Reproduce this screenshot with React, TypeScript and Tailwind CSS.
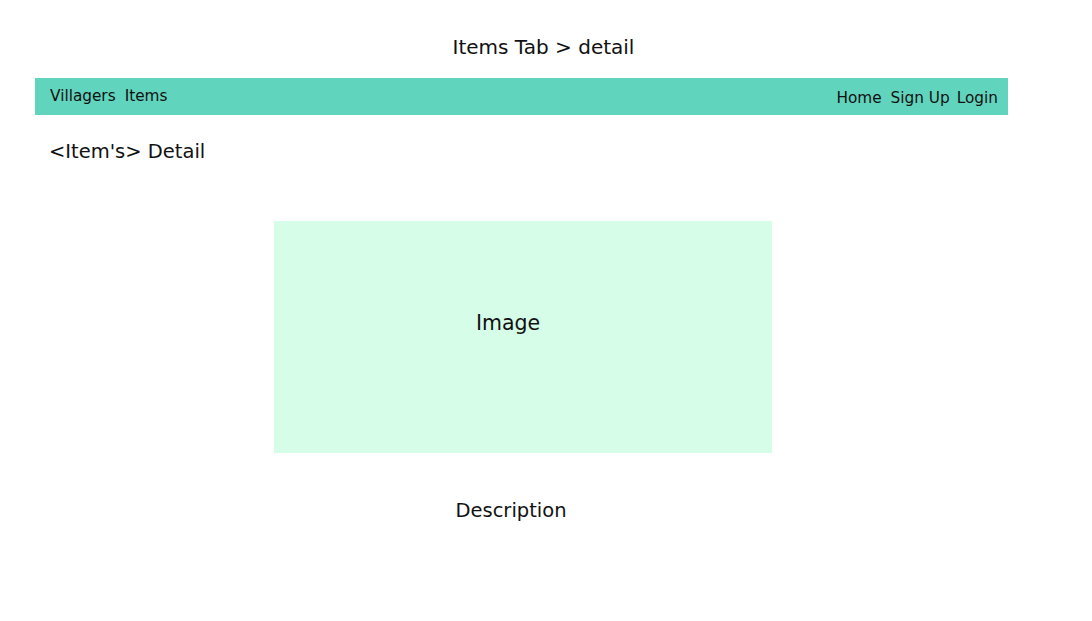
export default function App() {
  return (
    <div className="w-[1092px] h-[621px] bg-white text-[#111] overflow-hidden" style={{ fontFamily: '"DejaVu Sans", Verdana, sans-serif' }}>
      <div className="pt-[35px] pr-[5px] h-[78px] text-center text-[20px] leading-[24px]">Items Tab &gt; detail</div>
      <div className="ml-[35px] w-[973px] h-[37px] bg-[#61d4bd] flex justify-between items-start">
        <div className="flex gap-[9px] pl-[15px] pt-[8px] text-[15.3px] leading-[20px]">
          <span>Villagers</span>
          <span>Items</span>
        </div>
        <div className="flex pr-[10px] pt-[10px] text-[15.3px] leading-[20px]">
          <span className="mr-[9px]">Home</span>
          <span className="mr-[7px]">Sign Up</span>
          <span>Login</span>
        </div>
      </div>
      <div className="pl-[49px] pt-[25px] text-[19.5px] leading-[24px]">&lt;Item's&gt; Detail</div>
      <div className="ml-[274px] mt-[57px] w-[498px] h-[232px] bg-[#d5fde8] pl-[202px] pt-[90px] text-[20.5px] leading-[24px]">Image</div>
      <div className="mt-[46px] w-[1022px] text-center text-[19.5px] leading-[24px]">Description</div>
    </div>
  );
}
